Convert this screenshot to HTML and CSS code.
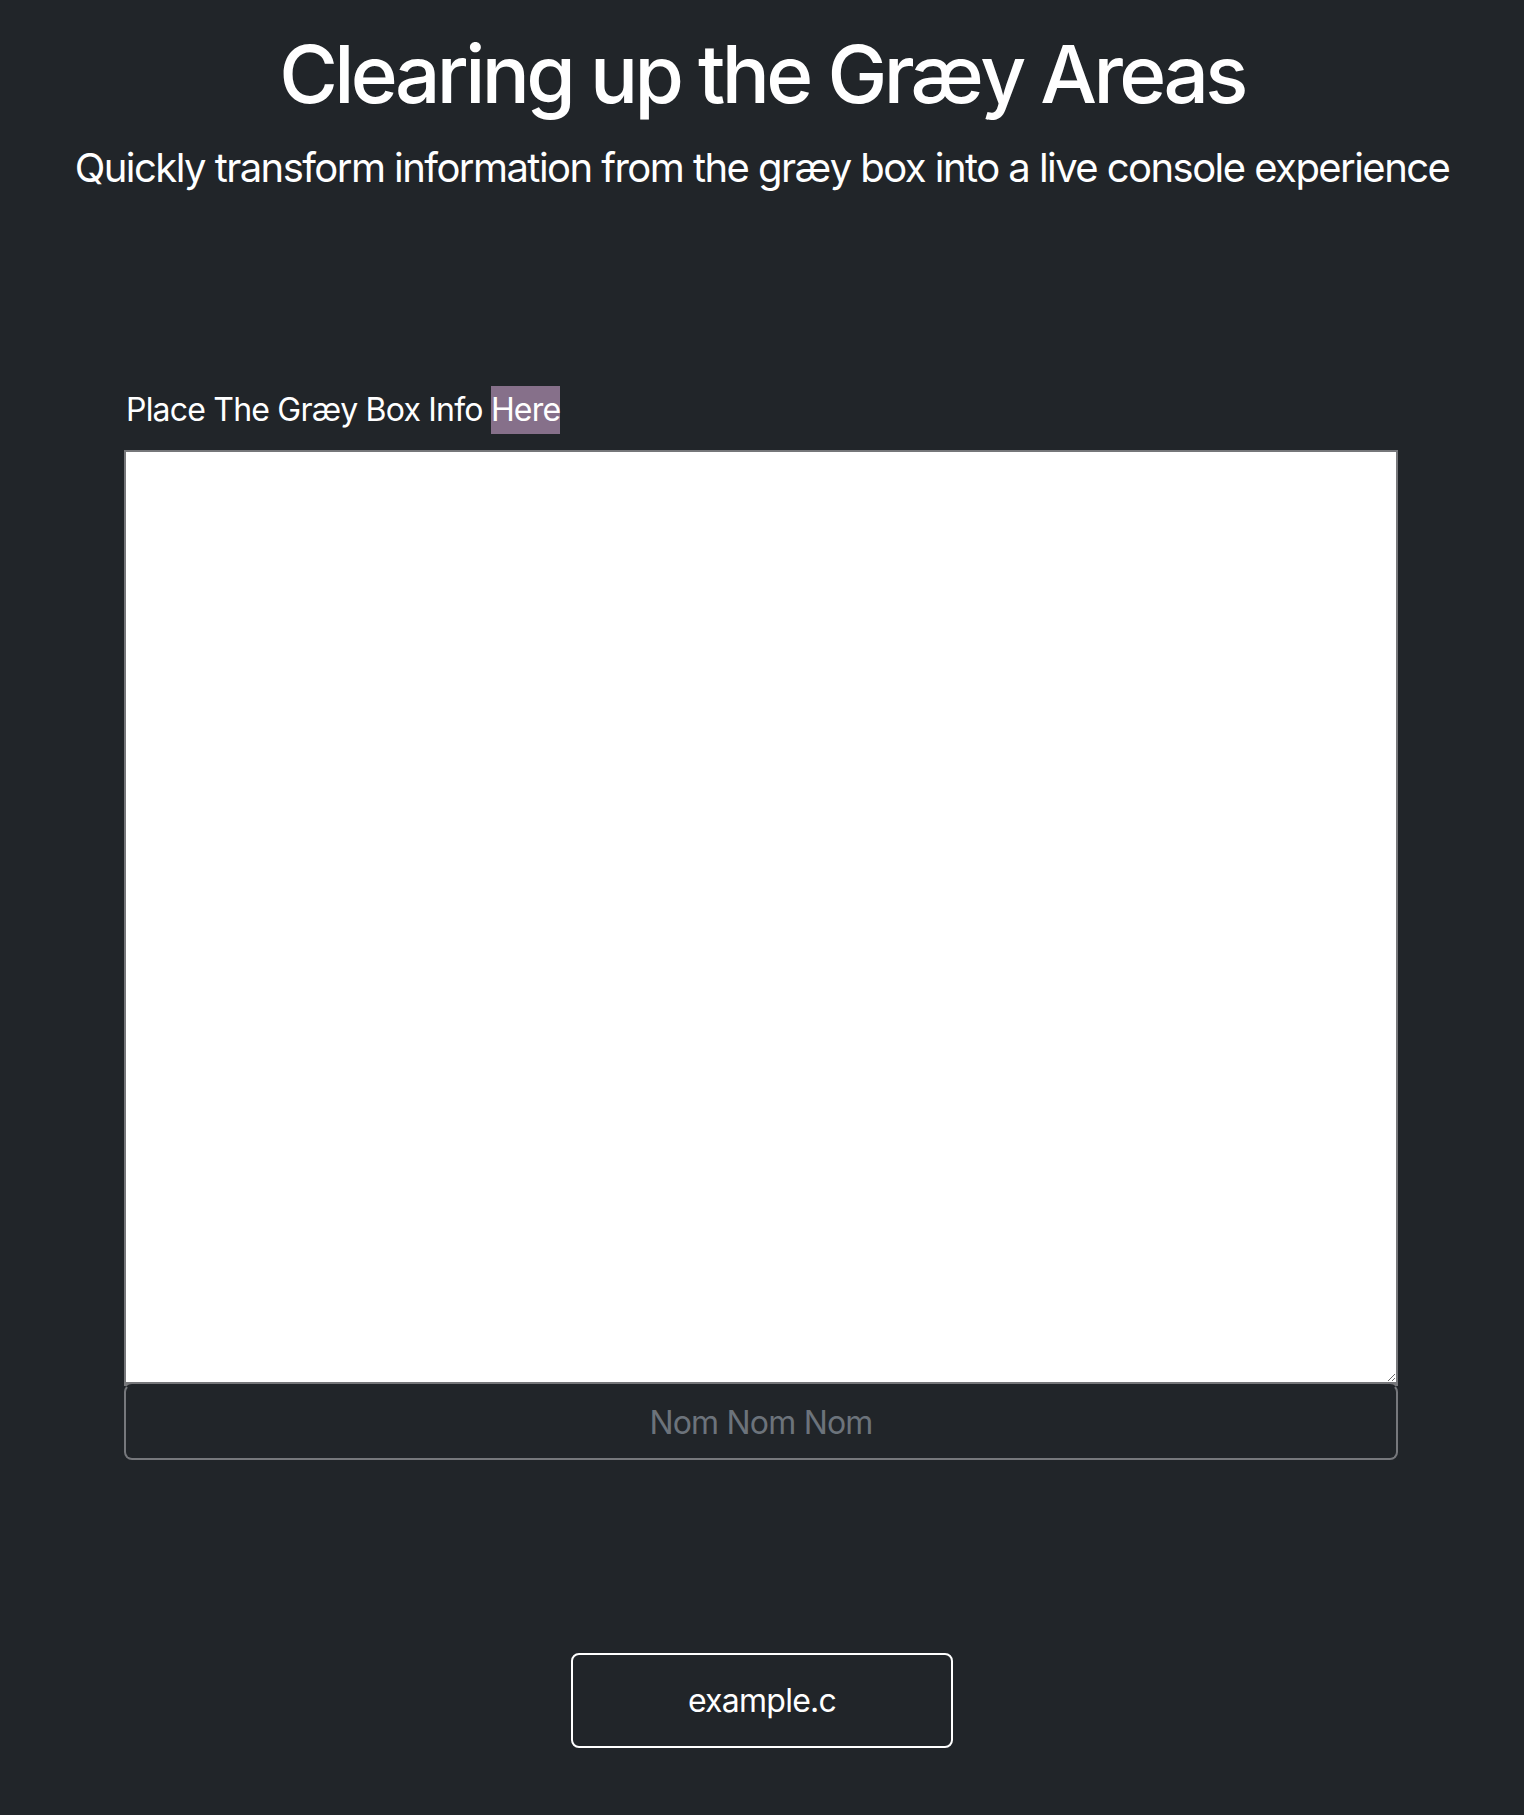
FILE: index.html
```html
<!DOCTYPE html>
<html lang="en">
<head>
<meta charset="utf-8">
<title>Clearing up the Græy Areas</title>
<link rel="stylesheet" href="styles.css">
</head>
<body>
<header class="hero">
  <h1 class="title">Clearing up the Græy Areas</h1>
  <p class="subtitle">Quickly transform information from the græy box into a live console experience</p>
</header>
<main class="form-area">
  <label class="label" for="info">Place The Græy Box Info <span class="hl">Here</span></label>
  <textarea id="info" class="box"></textarea>
  <input class="nom" type="text" placeholder="Nom Nom Nom">
</main>
<div class="actions">
  <button class="file-btn" type="button">example.c</button>
</div>
</body>
</html>
```

FILE: styles.css
```css
html, body {
  margin: 0;
  padding: 0;
}
body {
  background: #212529;
  color: #ffffff;
  font-family: Inter, "Noto Sans", "Liberation Sans", sans-serif;
  min-height: 1815px;
}
.hero {
  text-align: center;
  padding-top: 26px;
}
.title {
  margin: 0;
  font-size: 80px;
  font-weight: 500;
  line-height: 96px;
  letter-spacing: -3.6px;
}
.subtitle {
  margin: 22px 0 0;
  font-size: 40px;
  line-height: 48px;
  font-weight: 400;
  letter-spacing: -1.55px;
}
.form-area {
  display: flex;
  flex-direction: column;
  align-items: flex-start;
  margin: 194px 126px 0 124px;
}
.label {
  font-size: 32px;
  line-height: 48px;
  margin-left: 2px;
  margin-bottom: 16px;
  letter-spacing: -0.8px;
}
.hl {
  display: inline-block;
  background: #86708a;
  line-height: 48px;
}
.box {
  box-sizing: border-box;
  width: 100%;
  height: 936px;
  margin: 0;
  border: 2px solid #76777a;
  border-bottom-width: 4px;
  background: #ffffff;
  resize: vertical;
  font-size: 32px;
  display: block;
}
.nom {
  box-sizing: border-box;
  width: 100%;
  height: 76px;
  margin: -2px 0 0;
  border: 2px solid #76787c;
  border-top-color: transparent;
  border-radius: 8px;
  background: #212529;
  color: #ffffff;
  text-align: center;
  font-family: Inter, "Noto Sans", "Liberation Sans", sans-serif;
  font-size: 32px;
  letter-spacing: -0.8px;
}
.nom::placeholder {
  color: #6c737b;
}
.actions {
  display: flex;
  justify-content: center;
  margin-top: 193px;
}
.file-btn {
  box-sizing: border-box;
  width: 382px;
  height: 95px;
  background: transparent;
  border: 2px solid #ffffff;
  border-radius: 8px;
  color: #ffffff;
  font-family: Inter, "Noto Sans", "Liberation Sans", sans-serif;
  font-size: 32px;
  font-weight: 400;
  letter-spacing: -0.75px;
}
```
